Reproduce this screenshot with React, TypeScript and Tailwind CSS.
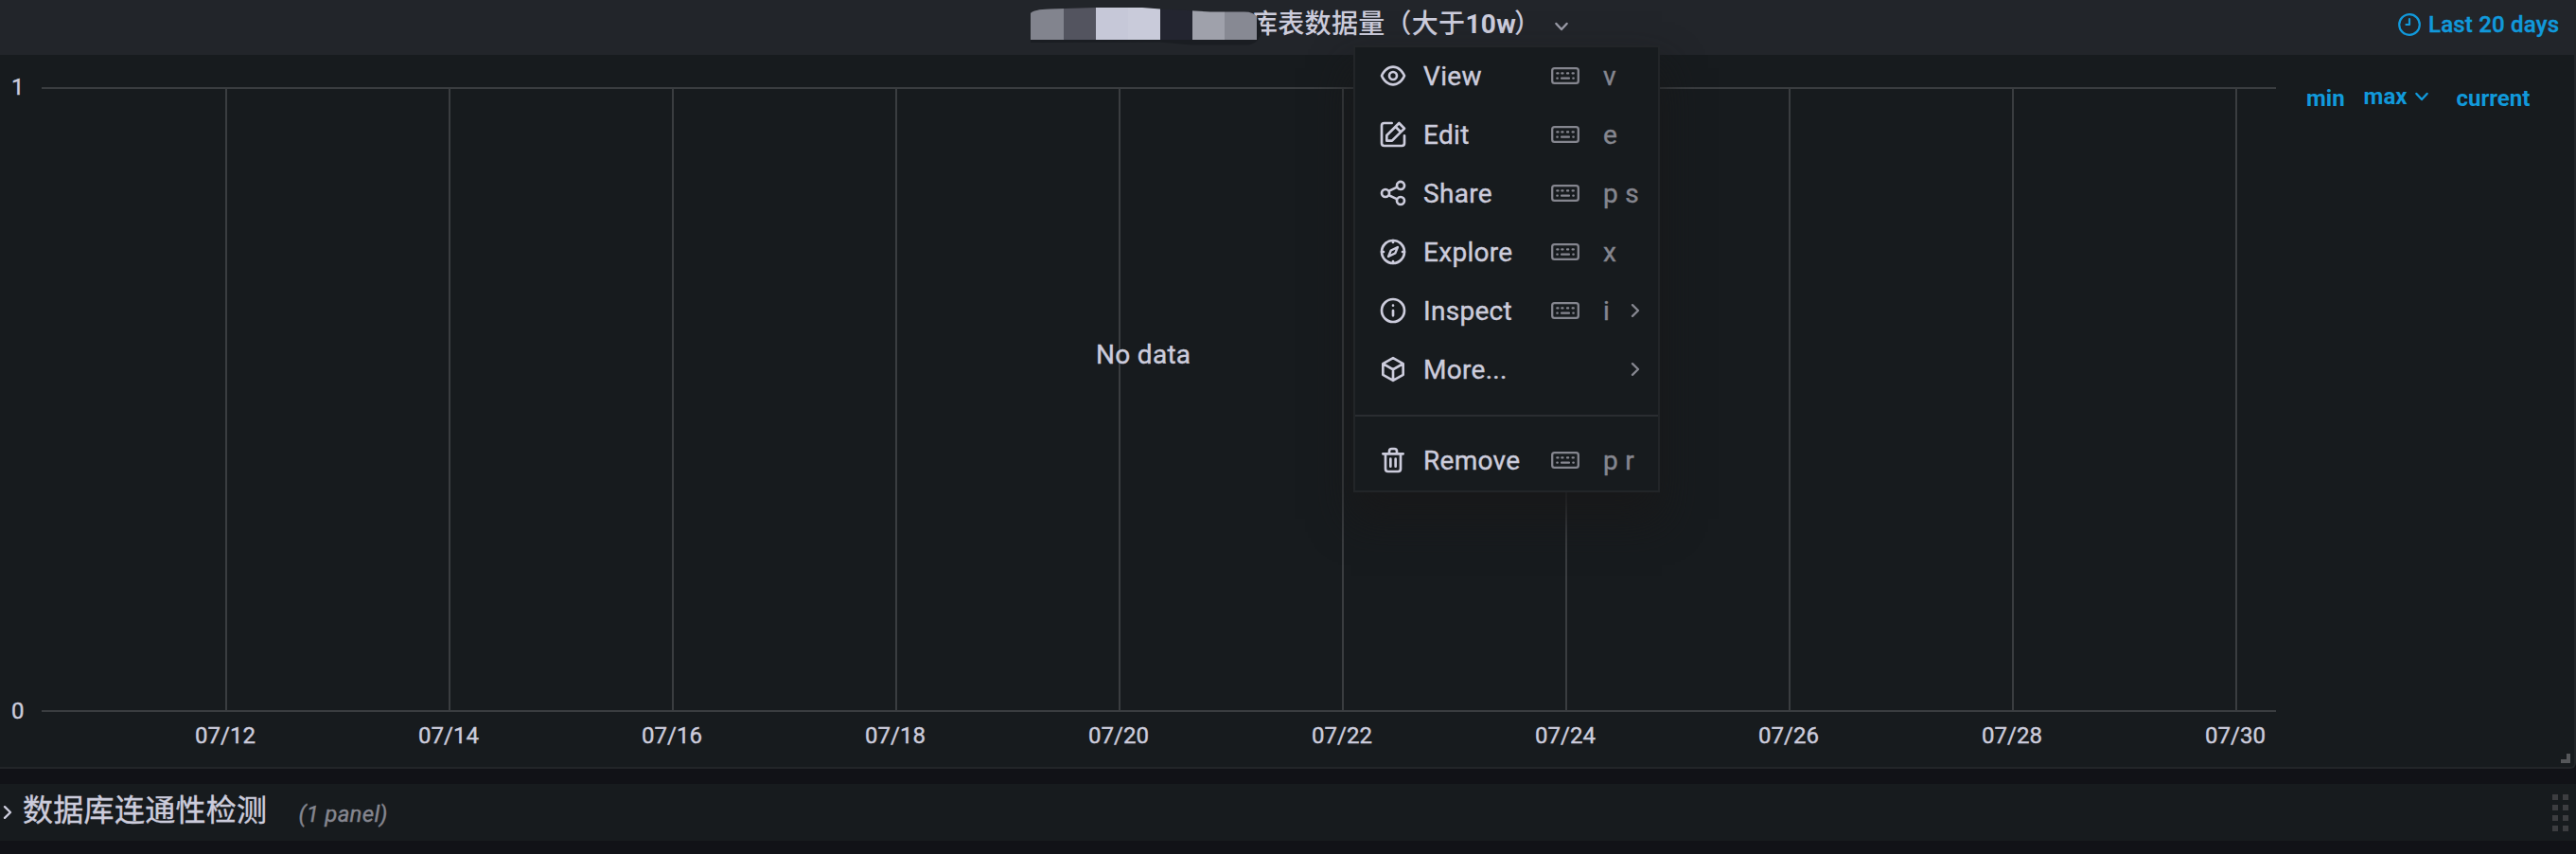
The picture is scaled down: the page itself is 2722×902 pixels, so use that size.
import React from "react";

const FONT = "font-['Roboto','Noto_Sans_CJK_SC',sans-serif]";

const PATHS: Record<string, string> = {
  eye: "M21.92,11.6C19.9,6.91,16.1,4,12,4S4.1,6.91,2.08,11.6a1,1,0,0,0,0,.8C4.1,17.09,7.9,20,12,20s7.9-2.91,9.92-7.6A1,1,0,0,0,21.92,11.6ZM12,18c-3.17,0-6.17-2.29-7.9-6C5.83,8.29,8.83,6,12,6s6.17,2.29,7.9,6C18.17,15.71,15.17,18,12,18ZM12,8a4,4,0,1,0,4,4A4,4,0,0,0,12,8Zm0,6a2,2,0,1,1,2-2A2,2,0,0,1,12,14Z",
  edit: "M21,12a1,1,0,0,0-1,1v6a1,1,0,0,1-1,1H5a1,1,0,0,1-1-1V5A1,1,0,0,1,5,4h6a1,1,0,0,0,0-2H5A3,3,0,0,0,2,5V19a3,3,0,0,0,3,3H19a3,3,0,0,0,3-3V13A1,1,0,0,0,21,12ZM6,12.76V17a1,1,0,0,0,1,1h4.24a1,1,0,0,0,.71-.29l6.92-6.93h0L21.71,8a1,1,0,0,0,0-1.42L17.47,2.29a1,1,0,0,0-1.42,0L13.23,5.12h0L6.29,12.05A1,1,0,0,0,6,12.76ZM16.76,4.41l2.83,2.83L18.17,8.66,15.34,5.83ZM8,13.17l5.93-5.93,2.83,2.83L10.83,16H8Z",
  share: "M18,14a4,4,0,0,0-3.08,1.48l-5.1-2.35a3.64,3.64,0,0,0,0-2.26l5.1-2.35A4,4,0,1,0,14,6a4.17,4.17,0,0,0,.07.71L8.79,9.14a4,4,0,1,0,0,5.72l5.28,2.43A4.17,4.17,0,0,0,14,18a4,4,0,1,0,4-4ZM18,4a2,2,0,1,1-2,2A2,2,0,0,1,18,4ZM6,14a2,2,0,1,1,2-2A2,2,0,0,1,6,14Zm12,6a2,2,0,1,1,2-2A2,2,0,0,1,18,20Z",
  trash: "M10,18a1,1,0,0,0,1-1V11a1,1,0,0,0-2,0v6A1,1,0,0,0,10,18ZM20,6H16V5a3,3,0,0,0-3-3H11A3,3,0,0,0,8,5V6H4A1,1,0,0,0,4,8H5V19a3,3,0,0,0,3,3h8a3,3,0,0,0,3-3V8h1a1,1,0,0,0,0-2ZM10,5a1,1,0,0,1,1-1h2a1,1,0,0,1,1,1V6H10Zm7,14a1,1,0,0,1-1,1H8a1,1,0,0,1-1-1V8H17Zm-3-1a1,1,0,0,0,1-1V11a1,1,0,0,0-2,0v6A1,1,0,0,0,14,18Z",
};

function MenuIcon({ name }: { name: string }) {
  if (PATHS[name]) {
    return (
      <svg viewBox="0 0 24 24" className="size-8 shrink-0" fill="currentColor">
        <path d={PATHS[name]} />
      </svg>
    );
  }
  return (
    <svg
      viewBox="0 0 24 24"
      className="size-8 shrink-0"
      fill="none"
      stroke="currentColor"
      strokeWidth="2"
      strokeLinecap="round"
      strokeLinejoin="round"
    >
      {name === "compass" && (
        <>
          <circle cx="12" cy="12" r="9" />
          <path d="M12 3v1.5M12 19.5V21M3 12h1.5M19.5 12H21" />
          <path strokeWidth="1.8" d="M15.7 8.3L13.7 13.1L8.3 15.7L10.3 10.9Z" />
        </>
      )}
      {name === "info" && (
        <>
          <circle cx="12" cy="12" r="9" />
          <path d="M12 12v4M12 8v.01" />
        </>
      )}
      {name === "cube" && <path d="M12 3.1L20 7.6V16.4L12 20.9L4 16.4V7.6ZM4.3 7.8L12 12.2L19.7 7.8M12 12.2V20.6" />}
    </svg>
  );
}

function KeyboardIcon() {
  return (
    <svg viewBox="0 0 30 18" className="h-[18px] w-[30px] shrink-0" fill="none" stroke="currentColor">
      <rect x="1.2" y="1.2" width="27.6" height="15.6" rx="2.4" strokeWidth="2.3" />
      <g strokeWidth="2.2" strokeLinecap="round">
        <path d="M6.3 6.4h1.2M11.3 6.4h1.2M17 6.4h1.2M22.6 6.4h1.2" />
        <path d="M6.3 11.7h.5M11 11.7h8M23.3 11.7h.5" />
      </g>
    </svg>
  );
}

function Chevron({ className, d }: { className: string; d: string }) {
  return (
    <svg viewBox="0 0 16 16" className={className} fill="none" stroke="currentColor" strokeWidth="2.4" strokeLinecap="round" strokeLinejoin="round">
      <path d={d} />
    </svg>
  );
}

const DOWN = "M2.4 5L8 11L13.6 5";
const RIGHT = "M5 2.2L11 8L5 13.8";

type Item = { icon: string; label: string; keys?: string; sub?: boolean };

const ITEMS: Item[] = [
  { icon: "eye", label: "View", keys: "v" },
  { icon: "edit", label: "Edit", keys: "e" },
  { icon: "share", label: "Share", keys: "p s" },
  { icon: "compass", label: "Explore", keys: "x" },
  { icon: "info", label: "Inspect", keys: "i", sub: true },
  { icon: "cube", label: "More...", sub: true },
];

function MenuRow({ icon, label, keys, sub }: Item) {
  return (
    <div className="flex h-[62px] items-center pr-4 pb-0.5 pl-6">
      <MenuIcon name={icon} />
      <span className="ml-4 w-[135px] pt-0.5 text-[28px] leading-10 tracking-[0.3px]">{label}</span>
      <div className="flex flex-1 items-center text-[#85868f]">
        {keys && (
          <>
            <KeyboardIcon />
            <span className="ml-[25px] pt-0.5 text-[28px] leading-10 tracking-[0.3px] whitespace-pre">{keys}</span>
          </>
        )}
        {sub && <Chevron className="ml-auto size-4" d={RIGHT} />}
      </div>
    </div>
  );
}

function PanelMenu() {
  return (
    <div className="absolute top-12 left-[1430px] z-10 w-[324px] border-2 border-[#222528] bg-[#171b1e] shadow-[0_26px_40px_2px_rgba(24,24,26,0.9)]">
      {ITEMS.map((item) => (
        <MenuRow key={item.label} {...item} />
      ))}
      <div className="my-4 h-0.5 bg-[#2a2d31]" />
      <MenuRow icon="trash" label="Remove" keys="p r" />
    </div>
  );
}

const MOSAIC = [
  { x: 0, w: 35, fill: "#82848e" },
  { x: 35, w: 34, fill: "#53545f" },
  { x: 69, w: 34, fill: "#c6c8d8" },
  { x: 103, w: 34, fill: "#c9cbda" },
  { x: 137, w: 34, fill: "#232530" },
  { x: 171, w: 34, fill: "#9fa1ab" },
  { x: 205, w: 34, fill: "#878993" },
];

function Mosaic() {
  return (
    <svg viewBox="0 0 246 52" className="relative z-[1] h-[52px] w-[246px] shrink-0">
      <defs>
        <clipPath id="brush">
          <path d="M0 14Q3 10 20 9.5L69 8H118L137 9.5L190 12.5H226Q236 12.5 239 18V42H0Z" />
        </clipPath>
      </defs>
      <path d="M0 38V45L137 44.5L170 47.5H228Q241 47 244 33Q244 22 236 15L226 30Z" fill="#1a1d22" />
      <g clipPath="url(#brush)">
        {MOSAIC.map((m) => (
          <rect key={m.x} x={m.x} y="0" width={m.w} height="52" fill={m.fill} />
        ))}
      </g>
    </svg>
  );
}

function PanelHeader() {
  return (
    <header className="flex h-[58px] items-start bg-[#22252a] [-webkit-text-stroke:0]">
      <div className="ml-[1089px] flex w-[1445px] items-start">
        <Mosaic />
        <h2 className="-ml-[13px] text-[28px] leading-[52px] font-medium tracking-[0.3px] whitespace-nowrap">
          库表数据量（大于<span className="font-bold">10w</span>
          <span className="-ml-0.5">）</span>
        </h2>
        <Chevron className="mt-5 ml-3.5 size-4 text-[#9a9ba7]" d={DOWN} />
      </div>
      <div className="flex h-[52px] items-center gap-2 text-2xl font-medium text-[#1199db]">
        <svg viewBox="0 0 24 24" className="size-6" fill="none" stroke="currentColor" strokeWidth="2.2" strokeLinecap="round" strokeLinejoin="round">
          <circle cx="12" cy="12" r="10.8" />
          <path d="M12 6v6H8.5" />
        </svg>
        <span className="tracking-[0.2px] whitespace-nowrap [-webkit-text-stroke:0.4px]">Last 20 days</span>
      </div>
    </header>
  );
}

const DATES = ["07/12", "07/14", "07/16", "07/18", "07/20", "07/22", "07/24", "07/26", "07/28", "07/30"];

function Graph() {
  return (
    <div className="flex h-[752px] pt-[34px]">
      <div className="flex w-11 flex-col justify-between pl-3 text-2xl">
        <span className="-mt-4 h-8 leading-8">1</span>
        <span className="mb-[43px] h-8 leading-8">0</span>
      </div>
      <div className="w-[2361px]">
        <div className="relative h-[660px] border-y-2 border-[#3a3d40]">
          <div className="flex h-full pl-[194px]">
            {DATES.map((d) => (
              <div key={d} className="h-full w-[236px] shrink-0 border-l-2 border-[#3a3d40] last:w-0.5" />
            ))}
          </div>
          <div className="absolute top-[261px] left-[1114px] text-[28px] leading-10 tracking-[0.3px]">No data</div>
        </div>
        <div className="flex pt-[9px] pl-[76px] text-2xl leading-8">
          {DATES.map((d) => (
            <span key={d} className="w-[236px] shrink-0 text-center">
              {d}
            </span>
          ))}
        </div>
      </div>
      <div className="-mt-2 flex items-start pl-8 text-2xl leading-8 font-bold text-[#1199db] [-webkit-text-stroke:0]">
        <span className="mt-1">min</span>
        <span className="mt-0.5 ml-5">max</span>
        <Chevron className="mt-2.5 ml-2 size-4" d={DOWN} />
        <span className="mt-1 ml-7">current</span>
      </div>
    </div>
  );
}

function RowBar() {
  return (
    <div className="mt-4 flex h-[60px] items-center bg-[#171b1e] pr-2">
      <Chevron className="size-4" d={RIGHT} />
      <span className="ml-2 pb-[5px] text-[32px] leading-[48px] tracking-[0.3px]">数据库连通性检测</span>
      <span className="mt-1 ml-[33px] text-2xl tracking-[0.3px] text-[#85868f] italic">(1 panel)</span>
      <div className="ml-auto grid grid-cols-2 gap-[5px]">
        {Array.from({ length: 8 }, (_, i) => (
          <div key={i} className="size-1.5 bg-[#3c3d40]" />
        ))}
      </div>
    </div>
  );
}

export default function App() {
  return (
    <div className={`h-[902px] w-[2722px] overflow-hidden bg-[#111217] text-[#ccccdc] [-webkit-text-stroke:0.4px] ${FONT}`}>
      <section className="relative h-[812px] rounded-br-md border-r-2 border-b-2 border-[#222528] bg-[#171b1e]">
        <PanelHeader />
        <Graph />
        <PanelMenu />
        <div className="absolute right-1 bottom-1 size-2.5 border-r-4 border-b-4 border-[#55575a]" />
      </section>
      <RowBar />
    </div>
  );
}
